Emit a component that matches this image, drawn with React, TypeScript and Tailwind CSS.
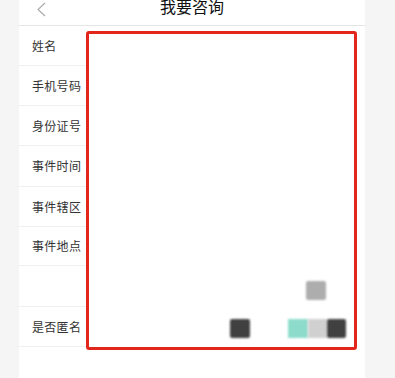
import React from "react";

const rows: { label: string; h: number }[] = [
  { label: "姓名", h: 40 },
  { label: "手机号码", h: 40 },
  { label: "身份证号", h: 40 },
  { label: "事件时间", h: 41 },
  { label: "事件辖区", h: 40 },
  { label: "事件地点", h: 39 },
  { label: "", h: 41 },
  { label: "是否匿名", h: 40 },
];

export default function App() {
  return (
    <div
      className="w-[395px] h-[378px] bg-[#f5f5f5] overflow-hidden flex"
      style={{ fontFamily: '"Noto Sans CJK SC", "Noto Sans", sans-serif' }}
    >
      <div className="ml-[19px] w-[346px] h-full bg-white flex flex-col relative">
        <div className="h-[26px] border-b border-[#e6e6e6] flex items-start">
          <svg
            className="ml-[17px] mt-[2px] shrink-0"
            width="11"
            height="15"
            viewBox="0 0 11 15"
            fill="none"
          >
            <path d="M9 1L2 7.5L9 14" stroke="#a8a8a8" strokeWidth="1.1" />
          </svg>
          <div className="flex-1 pr-[28px] text-center text-[16px] leading-[16px] -mt-[2px] text-[#111]">
            我要咨询
          </div>
        </div>
        {rows.map((r, i) => (
          <div
            key={i}
            className="flex items-center w-[124px] border-b border-[#f0f0f0] pl-[13px] text-[12px] tracking-[0.3px] text-[#333]"
            style={{ height: r.h }}
          >
            {r.label}
          </div>
        ))}
        <div className="absolute left-[67px] top-[31px] w-[271px] h-[319px] border-[3px] border-[#e2261c] rounded-[3px] bg-white flex flex-col items-end justify-end pr-[8px] pb-[9px] gap-[19px]">
          <div className="mr-[20px] w-[20px] h-[19px] bg-[#adadad] rounded-[2px] blur-[1px]" />
          <div className="flex">
            <div className="w-[20px] h-[19px] bg-[#404040] rounded-[2px] blur-[1px]" />
            <div className="ml-[38px] w-[20px] h-[19px] bg-[#8ddccb] blur-[1px]" />
            <div className="w-[19px] h-[19px] bg-[#d0d0d0] blur-[1px]" />
            <div className="w-[19px] h-[19px] bg-[#404040] rounded-[2px] blur-[1px]" />
          </div>
        </div>
      </div>
    </div>
  );
}
